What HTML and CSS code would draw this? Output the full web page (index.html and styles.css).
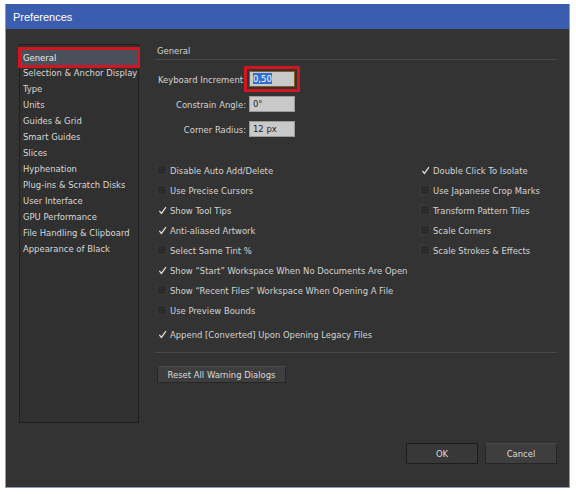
FILE: index.html
```html
<!DOCTYPE html>
<html>
<head>
<meta charset="utf-8">
<title>Preferences</title>
<link rel="stylesheet" href="styles.css">
</head>
<body>
<div class="window">
  <div class="titlebar">Preferences</div>
  <div class="content">
    <div class="top">
      <ul class="sidebar">
        <li class="selected">General</li>
        <li>Selection &amp; Anchor Display</li>
        <li>Type</li>
        <li>Units</li>
        <li>Guides &amp; Grid</li>
        <li>Smart Guides</li>
        <li>Slices</li>
        <li>Hyphenation</li>
        <li>Plug-ins &amp; Scratch Disks</li>
        <li>User Interface</li>
        <li>GPU Performance</li>
        <li>File Handling &amp; Clipboard</li>
        <li>Appearance of Black</li>
      </ul>
      <div class="panel">
        <div class="section-title">General</div>
        <div class="fields">
          <div class="field"><span class="label">Keyboard Increment:</span><span class="input focused"><span class="sel">0,50</span></span></div>
          <div class="field"><span class="label">Constrain Angle:</span><span class="input">0°</span></div>
          <div class="field"><span class="label">Corner Radius:</span><span class="input">12 px</span></div>
        </div>
        <div class="options">
          <div class="col left">
            <div class="cb"><span class="box"></span>Disable Auto Add/Delete</div>
            <div class="cb"><span class="box"></span>Use Precise Cursors</div>
            <div class="cb"><span class="box checked"><svg viewBox="0 0 10 10"><path d="M1.5 5.5 L3.8 8.2 L8.8 1.2"/></svg></span>Show Tool Tips</div>
            <div class="cb"><span class="box checked"><svg viewBox="0 0 10 10"><path d="M1.5 5.5 L3.8 8.2 L8.8 1.2"/></svg></span>Anti-aliased Artwork</div>
            <div class="cb"><span class="box"></span>Select Same Tint %</div>
            <div class="cb"><span class="box checked"><svg viewBox="0 0 10 10"><path d="M1.5 5.5 L3.8 8.2 L8.8 1.2"/></svg></span>Show “Start” Workspace When No Documents Are Open</div>
            <div class="cb"><span class="box"></span>Show “Recent Files” Workspace When Opening A File</div>
            <div class="cb"><span class="box"></span>Use Preview Bounds</div>
            <div class="cb extra"><span class="box checked"><svg viewBox="0 0 10 10"><path d="M1.5 5.5 L3.8 8.2 L8.8 1.2"/></svg></span>Append [Converted] Upon Opening Legacy Files</div>
          </div>
          <div class="col right">
            <div class="cb"><span class="box checked"><svg viewBox="0 0 10 10"><path d="M1.5 5.5 L3.8 8.2 L8.8 1.2"/></svg></span>Double Click To Isolate</div>
            <div class="cb"><span class="box"></span>Use Japanese Crop Marks</div>
            <div class="cb"><span class="box"></span>Transform Pattern Tiles</div>
            <div class="cb"><span class="box"></span>Scale Corners</div>
            <div class="cb"><span class="box"></span>Scale Strokes &amp; Effects</div>
          </div>
        </div>
        <div class="divider"></div>
        <button class="btn reset">Reset All Warning Dialogs</button>
      </div>
    </div>
    <div class="footer">
      <button class="btn ok">OK</button>
      <button class="btn cancel">Cancel</button>
    </div>
  </div>
</div>
</body>
</html>
```

FILE: styles.css
```css
html, body {
  margin: 0;
  padding: 0;
  background: #ffffff;
}
body {
  font-family: "DejaVu Sans Condensed", "DejaVu Sans", sans-serif;
  font-stretch: condensed;
  font-size: 9.4px;
  color: #d4d4d4;
}
.window {
  margin: 4px 0 0 5px;
  width: 565px;
  height: 484px;
  box-sizing: border-box;
  border-left: 1px solid #8c9cb8;
  border-right: 1px solid #8c9cb8;
  border-bottom: 1px solid #8c9cb8;
  background: #333333;
  display: flex;
  flex-direction: column;
}
.titlebar {
  height: 25px;
  background: #3a5db0;
  color: #ffffff;
  font-family: "Liberation Sans", "DejaVu Sans", sans-serif;
  font-stretch: normal;
  font-size: 11px;
  line-height: 26px;
  padding-left: 7px;
  flex: none;
}
.content {
  flex: 1;
  padding: 15px 12px 0 13px;
  display: flex;
  flex-direction: column;
}
.top {
  display: flex;
  gap: 16px;
}
.sidebar {
  list-style: none;
  margin: 0;
  padding: 4px 0 0 0;
  width: 120px;
  height: 379px;
  box-sizing: border-box;
  border: 1px solid #1f1f1f;
  background: #303030;
  flex: none;
}
.sidebar li {
  height: 16px;
  line-height: 16px;
  padding-left: 3px;
  white-space: nowrap;
  color: #d8d8d8;
}
.sidebar li.selected {
  background: #4a5059;
  color: #eaeaea;
  outline: 3px solid #d2151e;
  outline-offset: 0;
  margin: 1px 1px 0 1px;
  height: 15px;
  line-height: 15px;
  padding-left: 2px;
}
.panel {
  flex: 1;
  display: flex;
  flex-direction: column;
}
.section-title {
  height: 15px;
  line-height: 14px;
  padding-left: 2px;
  border-bottom: 1px solid #484848;
}
.fields {
  margin-top: 11px;
  display: flex;
  flex-direction: column;
  gap: 9px;
}
.field {
  display: flex;
  align-items: center;
  height: 16px;
}
.label {
  width: 91px;
  text-align: right;
  padding-right: 3px;
  white-space: nowrap;
}
.input {
  width: 46px;
  height: 16px;
  box-sizing: border-box;
  background: #c9c9c9;
  border: 1px solid #9a9a9a;
  color: #222;
  line-height: 14px;
  padding-left: 3px;
}
.input.focused {
  border: 1px solid #8a5a20;
  outline: 3px solid #d2151e;
  outline-offset: 2px;
}
.sel {
  background: #2f6fd4;
  color: #ffffff;
}
.options {
  margin-top: 23px;
  display: flex;
  justify-content: space-between;
}
.col {
  display: flex;
  flex-direction: column;
}
.col.left {
  padding-left: 2px;
}
.col.right {
  width: 137px;
}
.cb {
  height: 20px;
  display: flex;
  align-items: center;
  white-space: nowrap;
}
.cb.extra {
  margin-top: 4px;
}
.box {
  width: 8px;
  height: 8px;
  background: #2b2b2b;
  border: 1px solid #3a3a3a;
  margin-right: 3px;
  flex: none;
  display: flex;
}
.box.checked {
  background: transparent;
  border-color: transparent;
}
.box svg {
  width: 9px;
  height: 9px;
  flex: none;
}
.box svg path {
  fill: none;
  stroke: #e0e0e0;
  stroke-width: 1.4;
}
.divider {
  margin-top: 8px;
  border-top: 1px solid #484848;
}
.btn {
  font-family: inherit;
  font-stretch: condensed;
  font-size: 9.4px;
  color: #dcdcdc;
  background: #3e3e3e;
  border: 1px solid #262626;
  border-top-color: #4a4a4a;
  border-radius: 1px;
  padding: 0;
  cursor: default;
}
.reset {
  margin-top: 13px;
  margin-left: 2px;
  align-self: flex-start;
  width: 129px;
  height: 17px;
}
.footer {
  margin-top: 20px;
  display: flex;
  justify-content: flex-end;
  gap: 7px;
}
.ok, .cancel {
  width: 72px;
  height: 21px;
}
.ok {
  background: #383838;
  border-color: #1c1c1c;
}
```
